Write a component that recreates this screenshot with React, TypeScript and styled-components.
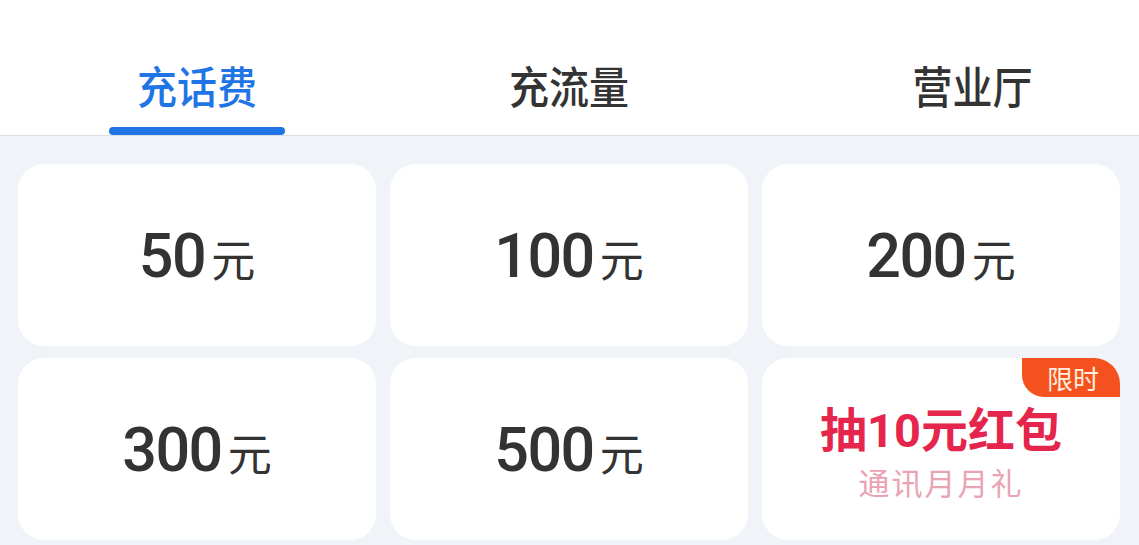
import styled, { createGlobalStyle } from "styled-components";

const GlobalStyle = createGlobalStyle`
  html, body {
    margin: 0;
    padding: 0;
    background: #f0f3f8;
  }
  body {
    font-family: Roboto, "Noto Sans CJK SC", sans-serif;
  }
`;

const Page = styled.div`
  width: 1139px;
  height: 545px;
  overflow: hidden;
  display: flex;
  flex-direction: column;
  background: linear-gradient(#f8f9fb, #f0f3f8 140px);
`;

const TabBar = styled.div`
  height: 135px;
  background: #fff;
  border-bottom: 1px solid #dcdee2;
  display: grid;
  grid-template-columns: 358px 358px 1fr;
  column-gap: 14px;
  padding-left: 18px;
  align-items: end;
`;

const Tab = styled.div<{ $shift?: number }>`
  display: flex;
  flex-direction: column;
  align-items: center;
  transform: translateX(${(p) => p.$shift ?? 0}px);
`;

const TabLabel = styled.div<{ $active?: boolean }>`
  font-family: "Noto Sans CJK SC", sans-serif;
  font-size: 40px;
  line-height: 48px;
  font-weight: 500;
  transform: scaleY(1.1);
  color: ${(p) => (p.$active ? "#1f74e6" : "#333")};
`;

const Indicator = styled.div<{ $active?: boolean }>`
  width: 176px;
  height: 8px;
  margin-top: 18px;
  border-radius: 4px;
  background: ${(p) => (p.$active ? "#1f74e6" : "transparent")};
`;

const Grid = styled.div`
  display: grid;
  grid-template-columns: repeat(3, 358px);
  grid-auto-rows: 182px;
  column-gap: 14px;
  row-gap: 12px;
  padding: 28px 18px 0;
`;

const Card = styled.div`
  position: relative;
  background: #fff;
  border-radius: 26px;
  display: flex;
  flex-direction: column;
  align-items: center;
  justify-content: center;
  overflow: hidden;
`;

const Amount = styled.div`
  display: flex;
  align-items: baseline;
  gap: 6px;
  color: #333;
  margin-top: 2px;
`;

const Number = styled.span`
  font-family: Roboto, sans-serif;
  font-size: 61px;
  font-weight: 500;
  letter-spacing: -1.5px;
`;

const Unit = styled.span`
  font-family: "Noto Sans CJK SC", sans-serif;
  font-size: 44px;
  font-weight: 400;
`;

const Badge = styled.div`
  position: absolute;
  top: 0;
  right: 0;
  width: 98px;
  height: 39px;
  background: #f4511e;
  border-bottom-left-radius: 22px;
  color: #ffeede;
  font-family: "Noto Sans CJK SC", sans-serif;
  font-size: 26px;
  line-height: 39px;
  text-align: center;
  padding-left: 4px;
  box-sizing: border-box;
`;

const PromoTitle = styled.div`
  font-family: Roboto, "Noto Sans CJK SC", sans-serif;
  font-size: 47px;
  font-weight: 700;
  line-height: 54px;
  color: #e5254b;
  margin-top: 8px;
`;

const PromoSub = styled.div`
  font-family: "Noto Sans CJK SC", sans-serif;
  font-size: 31px;
  line-height: 40px;
  color: #eaa3b3;
  letter-spacing: 2px;
  margin-top: 4px;
`;

const tabs = [
  { label: "充话费", active: true, shift: 0 },
  { label: "充流量", active: false, shift: 0 },
  { label: "营业厅", active: false, shift: 22 },
];

const amounts = ["50", "100", "200", "300", "500"];

export default function App() {
  return (
    <>
      <GlobalStyle />
      <Page>
        <TabBar>
          {tabs.map((t) => (
            <Tab key={t.label} $shift={t.shift}>
              <TabLabel $active={t.active}>{t.label}</TabLabel>
              <Indicator $active={t.active} />
            </Tab>
          ))}
        </TabBar>
        <Grid>
          {amounts.map((a) => (
            <Card key={a}>
              <Amount>
                <Number>{a}</Number>
                <Unit>元</Unit>
              </Amount>
            </Card>
          ))}
          <Card>
            <Badge>限时</Badge>
            <PromoTitle>抽10元红包</PromoTitle>
            <PromoSub>通讯月月礼</PromoSub>
          </Card>
        </Grid>
      </Page>
    </>
  );
}
